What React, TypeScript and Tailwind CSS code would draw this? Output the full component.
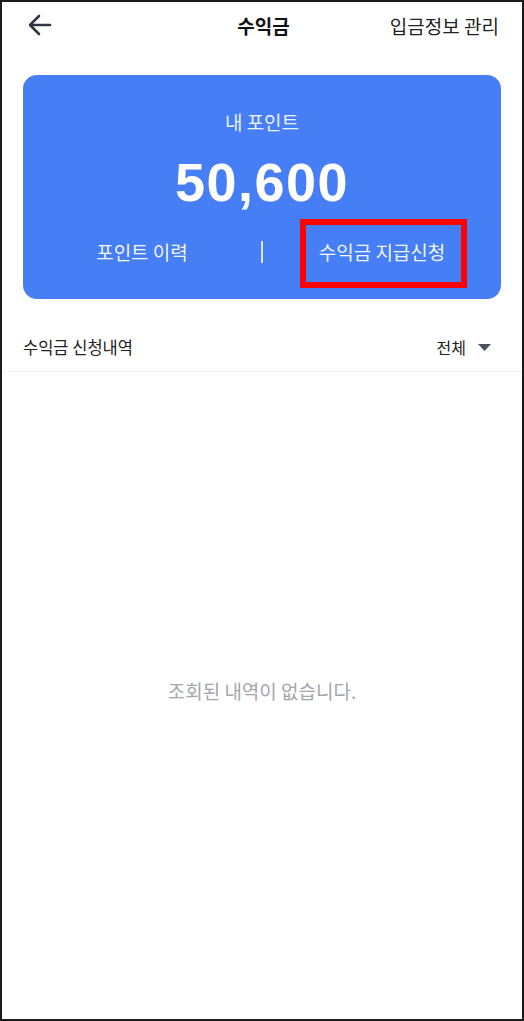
import React from "react";

export default function App() {
  const kr = { fontFamily: '"Noto Sans CJK KR", "Noto Sans", sans-serif' };
  return (
    <div
      className="relative w-[524px] h-[1021px] overflow-hidden bg-white border-2 border-[#1c1c1c]"
      style={kr}
    >
      {/* Header */}
      <div className="grid grid-cols-[1fr_auto_1fr] items-center h-[46px] pl-[26px] pr-[23px]">
        <div className="flex items-center">
          <svg width="24" height="22" viewBox="0 0 24 22" fill="none" stroke="#2f3542" strokeWidth="2.6" strokeLinecap="round" strokeLinejoin="round">
            <path d="M22 11H3" />
            <path d="M11 2L2 11l9 9" />
          </svg>
        </div>
        <div className="text-[19px] font-bold text-[#111] leading-none">수익금</div>
        <div className="text-right text-[19px] text-[#222] leading-none">입금정보 관리</div>
      </div>

      {/* Point card */}
      <div className="mx-[21px] mt-[27px] h-[224px] rounded-[14px] bg-[#467ef6] flex flex-col items-center text-white">
        <div className="mt-[35px] text-[19px] leading-[24px] text-white/90">내 포인트</div>
        <div
          className="mt-[18px] text-[54px] leading-[60px] font-bold tracking-[1.5px]"
          style={{ fontFamily: '"Liberation Sans", Arial, sans-serif' }}
        >
          50,600
        </div>
        <div className="mt-[26px] w-full grid grid-cols-[1fr_2px_1fr] items-center">
          <div className="text-center text-[19px] leading-[28px] text-white/95">포인트 이력</div>
          <div className="h-[22px] w-[2px] bg-white/80 justify-self-center" />
          <div className="text-center text-[19px] leading-[28px] text-white/95">수익금 지급신청</div>
        </div>
      </div>

      {/* Red annotation box */}
      <div className="absolute left-[298px] top-[217px] w-[167px] h-[69px] border-[6px] border-[#ff0000]" />

      {/* Section header */}
      <div className="mt-[24px] h-[49px] flex items-center justify-between pl-[21px] pr-[31px] border-b border-[#f2f3f5]">
        <div className="text-[16.5px] text-[#222]">수익금 신청내역</div>
        <div className="flex items-center gap-[12px]">
          <span className="text-[16px] text-[#222]">전체</span>
          <svg width="13" height="7" viewBox="0 0 13 7">
            <path d="M0 0h13L6.5 7z" fill="#4b5160" />
          </svg>
        </div>
      </div>

      {/* Empty state */}
      <div className="pt-[307px] text-center text-[19px] leading-[24px] text-[#a3a6ad]">
        조회된 내역이 없습니다.
      </div>
    </div>
  );
}
